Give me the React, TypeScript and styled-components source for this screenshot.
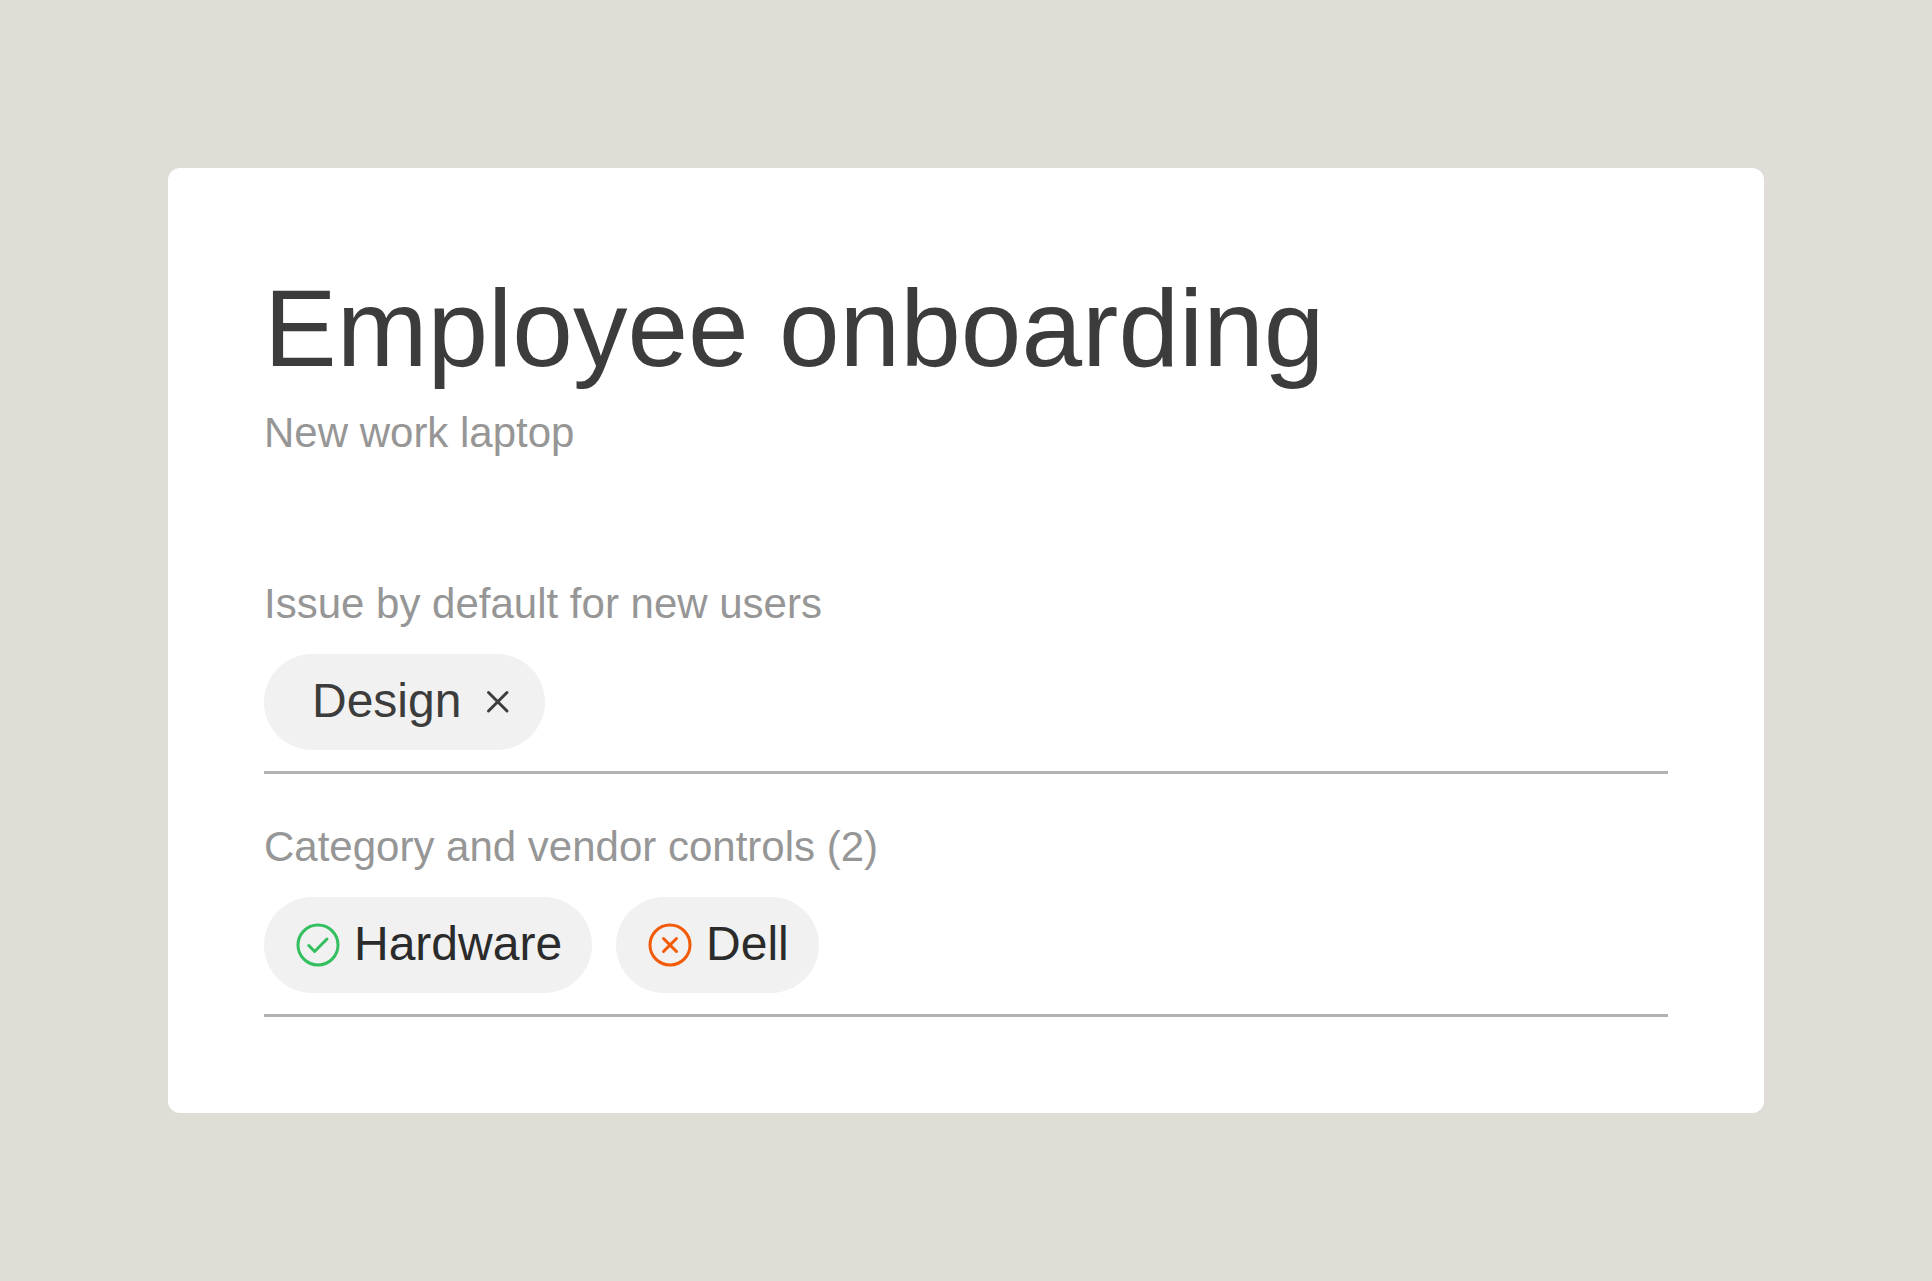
import React from "react";
import styled, { createGlobalStyle } from "styled-components";

const GlobalStyle = createGlobalStyle`
  *, *::before, *::after { box-sizing: border-box; }
  body {
    margin: 0;
    background: #dfddd6;
    font-family: "Liberation Sans", Arial, Helvetica, sans-serif;
  }
`;

const Page = styled.main`
  display: flex;
  flex-direction: column;
  justify-content: center;
  min-height: 100vh;
  padding: 96px 168px;
`;

const Card = styled.article`
  padding: 96px;
  border-radius: 12px;
  background: #ffffff;
`;

const Header = styled.header`
  display: flex;
  flex-direction: column;
  gap: 11px;
  margin-bottom: 111px;
`;

const Title = styled.h1`
  margin: 0;
  color: #3c3c3c;
  font-size: 109px;
  font-weight: 400;
  line-height: 128px;
`;

const Caption = styled.p`
  margin: 0;
  color: #969696;
  font-size: 42px;
  font-weight: 400;
  line-height: 60px;
`;

const Fields = styled.div`
  display: flex;
  flex-direction: column;
  gap: 43px;
`;

const Field = styled.section`
  display: flex;
  flex-direction: column;
  gap: 20px;
  padding-bottom: 21px;
  border-bottom: 3px solid #b2b2b2;
`;

const ChipList = styled.ul`
  display: flex;
  flex-wrap: wrap;
  gap: 24px;
  margin: 0;
  padding: 0;
  list-style: none;
`;

const Chip = styled.li<{ $removable?: boolean }>`
  display: flex;
  align-items: center;
  gap: 12px;
  height: 96px;
  padding: ${({ $removable }) => ($removable ? "0 24px 0 48px" : "0 30px")};
  border-radius: 48px;
  background: #f1f1f1;
  color: ${({ $removable }) => ($removable ? "#3c3c3c" : "#2b2b2b")};
  font-size: 48px;
  line-height: 60px;
`;

const ChipLabel = styled.span`
  padding-bottom: 2px;
`;

const RemoveButton = styled.button`
  display: flex;
  width: 48px;
  height: 48px;
  padding: 0;
  border: 0;
  background: none;
  color: inherit;
  cursor: pointer;
`;

const Icon = styled.svg`
  display: block;
  flex: none;
  width: 48px;
  height: 48px;
  fill: none;
  stroke: currentColor;
  stroke-width: 3;
  stroke-linecap: round;
  stroke-linejoin: round;
`;

const AllowedIcon = styled(Icon)`
  color: #33bf5f;
`;

const BlockedIcon = styled(Icon)`
  color: #f25a07;
`;

export default function App() {
  return (
    <>
      <GlobalStyle />
      <Page>
        <Card>
          <Header>
            <Title>Employee onboarding</Title>
            <Caption>New work laptop</Caption>
          </Header>
          <Fields>
            <Field aria-labelledby="default-users">
              <Caption as="h2" id="default-users">
                Issue by default for new users
              </Caption>
              <ChipList>
                <Chip $removable>
                  <ChipLabel>Design</ChipLabel>
                  <RemoveButton type="button" aria-label="Remove Design">
                    <Icon viewBox="0 0 48 48" aria-hidden="true">
                      <path d="M15.5 14.5 34 33M34 14.5 15.5 33" />
                    </Icon>
                  </RemoveButton>
                </Chip>
              </ChipList>
            </Field>
            <Field aria-labelledby="vendor-controls">
              <Caption as="h2" id="vendor-controls">
                Category and vendor controls (2)
              </Caption>
              <ChipList>
                <Chip>
                  <AllowedIcon viewBox="0 0 48 48" aria-hidden="true">
                    <circle cx="24" cy="24" r="20" />
                    <path d="M14.8 24.5 20.6 30.5 33 18" />
                  </AllowedIcon>
                  <ChipLabel>Hardware</ChipLabel>
                </Chip>
                <Chip>
                  <BlockedIcon viewBox="0 0 48 48" aria-hidden="true">
                    <circle cx="24" cy="24" r="20" />
                    <path d="M17.5 17.5 30.5 30.5M30.5 17.5 17.5 30.5" />
                  </BlockedIcon>
                  <ChipLabel>Dell</ChipLabel>
                </Chip>
              </ChipList>
            </Field>
          </Fields>
        </Card>
      </Page>
    </>
  );
}
